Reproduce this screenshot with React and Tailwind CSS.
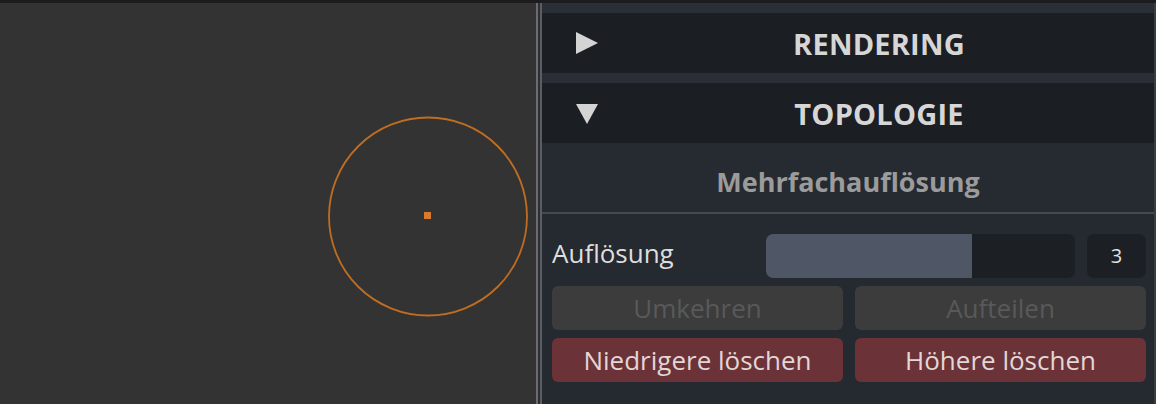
import React from 'react'

const font = { fontFamily: '"Open Sans", "Noto Sans", sans-serif' }

const Arrow = ({ open }) => (
    <svg width="22" height="22" viewBox="0 0 22 22" className="shrink-0">
        {open
            ? <polygon points="0,2 22,2 11,22" fill="#d4d4d4" />
            : <polygon points="0,0 22,11 0,22" fill="#d4d4d4" />}
    </svg>
)

const Header = ({ title, open }) => (
    <div className="h-[60px] bg-[#1b1e23] flex items-center pl-[34px]">
        <Arrow open={open} />
        <div className="flex-1 ml-[6px] text-center text-[29px] font-bold text-[#d6d6d6] tracking-[0.2px] leading-none">{title}</div>
    </div>
)

const Button = ({ children, danger }) => (
    <div
        className={`h-[44px] rounded-[6px] flex items-center justify-center text-[26px] ${danger ? 'bg-[#6b3337] text-[#e3d6d6]' : 'bg-[#3c3c3d] text-[#595959]'}`}
    >
        {children}
    </div>
)

export default function App() {
    return (
        <div className="w-[1156px] h-[404px] flex flex-col bg-[#1c1c1e] overflow-hidden" style={font}>
            <div className="h-[3px] shrink-0 bg-[#1c1c1e]" />
            <div className="flex flex-1 min-h-0">
                {/* viewport */}
                <div className="w-[536px] bg-[#333333] relative">
                    <svg width="536" height="401" className="absolute left-0 top-0">
                        <circle cx="428" cy="213.5" r="99" fill="none" stroke="#c06d22" strokeWidth="1.8" />
                        <rect x="424" y="209" width="7" height="7" fill="#d9792b" />
                    </svg>
                </div>
                <div className="w-[2px] bg-[#6b6b70]" />
                <div className="w-[2px] bg-[#2e2e32]" />
                <div className="w-[2px] bg-[#5c5d63]" />

                {/* side panel */}
                <div className="flex-1 flex bg-[#2a2e36]">
                    <div className="flex-1 flex flex-col pt-[10px]">
                        <Header title="RENDERING" />
                        <div className="h-[10px]" />
                        <Header title="TOPOLOGIE" open />
                        <div className="h-[69px] bg-[#262a31] flex items-center justify-center pt-[8px] text-[27px] font-bold text-[#9b9b9b] leading-none">
                            Mehrfachauflösung
                        </div>
                        <div className="h-[2px] bg-[#46494f]" />
                        <div className="flex-1 bg-[#252930] pl-[10px] pr-[8px] pt-[20px] flex flex-col gap-[8px]">
                            <div className="flex items-center h-[44px]">
                                <div className="w-[214px] text-[26px] text-[#dedede] pb-[6px]">Auflösung</div>
                                <div className="w-[309px] h-[44px] rounded-[7px] bg-[#1c1f24] overflow-hidden flex">
                                    <div className="w-[206px] h-full bg-[#4f5665]" />
                                </div>
                                <div className="ml-[12px] w-[59px] h-[44px] rounded-[7px] bg-[#1c1f24] flex items-center justify-center text-[20px] text-[#e2e2e2]">
                                    3
                                </div>
                            </div>
                            <div className="grid grid-cols-2 gap-[12px]">
                                <Button>Umkehren</Button>
                                <Button>Aufteilen</Button>
                            </div>
                            <div className="grid grid-cols-2 gap-[12px]">
                                <Button danger>Niedrigere löschen</Button>
                                <Button danger>Höhere löschen</Button>
                            </div>
                        </div>
                    </div>
                    <div className="w-[2px] bg-[#3a3d44]" />
                </div>
            </div>
        </div>
    )
}
